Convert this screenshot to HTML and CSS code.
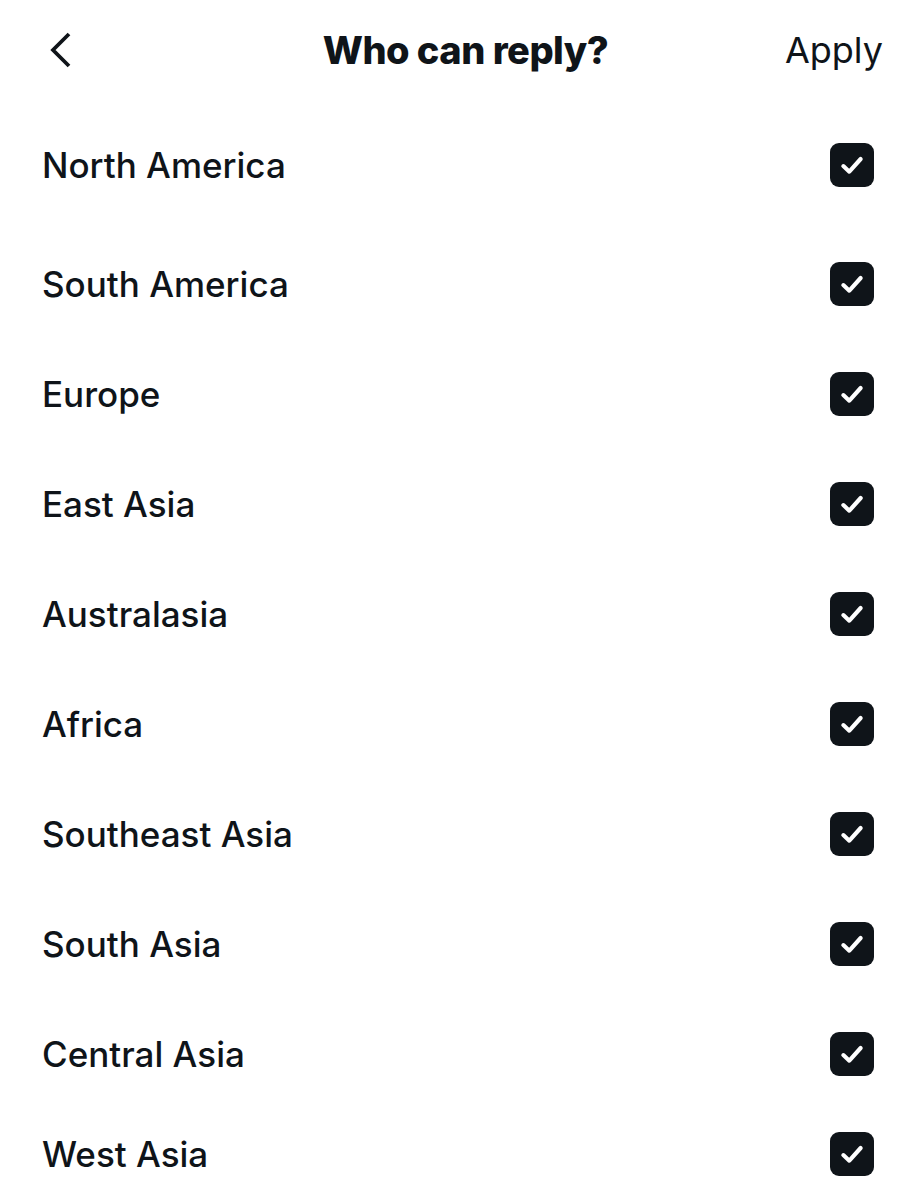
FILE: index.html
```html
<!DOCTYPE html>
<html lang="en">
  <head>
    <meta charset="UTF-8" />
    <meta name="viewport" content="width=device-width, initial-scale=1.0" />
    <title>Who can reply?</title>
    <link rel="stylesheet" href="styles.css">
  </head>
  <body>
    <div class="screen">
      <div class="header">
        <button class="back-btn" aria-label="Back">
          <svg width="24" height="36" viewBox="0 0 24 36">
            <path d="M21 2 L5 18 L21 34" fill="none" stroke="#0f1419" stroke-width="3.8" />
          </svg>
        </button>
        <h1 class="title">Who can reply?</h1>
        <button class="apply-btn">Apply</button>
      </div>

      <ul class="region-list">
        <li class="region first">
          <span class="region-name">North America</span>
          <span class="check"><svg viewBox="0 0 24 24"><path d="M5.5 12.8 L10 17 L18.5 7.5" /></svg></span>
        </li>
        <li class="region">
          <span class="region-name">South America</span>
          <span class="check"><svg viewBox="0 0 24 24"><path d="M5.5 12.8 L10 17 L18.5 7.5" /></svg></span>
        </li>
        <li class="region">
          <span class="region-name">Europe</span>
          <span class="check"><svg viewBox="0 0 24 24"><path d="M5.5 12.8 L10 17 L18.5 7.5" /></svg></span>
        </li>
        <li class="region">
          <span class="region-name">East Asia</span>
          <span class="check"><svg viewBox="0 0 24 24"><path d="M5.5 12.8 L10 17 L18.5 7.5" /></svg></span>
        </li>
        <li class="region">
          <span class="region-name">Australasia</span>
          <span class="check"><svg viewBox="0 0 24 24"><path d="M5.5 12.8 L10 17 L18.5 7.5" /></svg></span>
        </li>
        <li class="region">
          <span class="region-name">Africa</span>
          <span class="check"><svg viewBox="0 0 24 24"><path d="M5.5 12.8 L10 17 L18.5 7.5" /></svg></span>
        </li>
        <li class="region">
          <span class="region-name">Southeast Asia</span>
          <span class="check"><svg viewBox="0 0 24 24"><path d="M5.5 12.8 L10 17 L18.5 7.5" /></svg></span>
        </li>
        <li class="region">
          <span class="region-name">South Asia</span>
          <span class="check"><svg viewBox="0 0 24 24"><path d="M5.5 12.8 L10 17 L18.5 7.5" /></svg></span>
        </li>
        <li class="region">
          <span class="region-name">Central Asia</span>
          <span class="check"><svg viewBox="0 0 24 24"><path d="M5.5 12.8 L10 17 L18.5 7.5" /></svg></span>
        </li>
        <li class="region last">
          <span class="region-name">West Asia</span>
          <span class="check"><svg viewBox="0 0 24 24"><path d="M5.5 12.8 L10 17 L18.5 7.5" /></svg></span>
        </li>
      </ul>
    </div>
  </body>
</html>
```

FILE: styles.css
```css
* {
  margin: 0;
  padding: 0;
  box-sizing: border-box;
}

body {
  background: #ffffff;
  font-family: "Inter", "Liberation Sans", sans-serif;
  color: #0f1419;
  height: 1200px;
  overflow: hidden;
}

.screen {
  width: 921px;
}

.header {
  display: flex;
  align-items: center;
  justify-content: space-between;
  height: 100px;
  padding: 0 38px 0 48px;
}

.back-btn,
.apply-btn {
  background: none;
  border: none;
  color: #0f1419;
  font-family: inherit;
  cursor: pointer;
}

.back-btn {
  display: flex;
  width: 130px;
}

.title {
  font-size: 38px;
  font-weight: 800;
  letter-spacing: -0.5px;
}

.apply-btn {
  width: 130px;
  text-align: right;
  font-size: 36px;
  font-weight: 400;
}

.region-list {
  list-style: none;
  padding-top: 10px;
}

.region {
  display: flex;
  align-items: center;
  justify-content: space-between;
  height: 110px;
  padding: 0 47px 0 42px;
}

.region.first {
  margin-bottom: 9px;
}

.region.last {
  height: 90px;
}

.region-name {
  font-size: 35px;
  font-weight: 500;
}

.check {
  width: 44px;
  height: 44px;
  border-radius: 9px;
  background: #0f1419;
  display: flex;
  align-items: center;
  justify-content: center;
}

.check svg {
  width: 32px;
  height: 32px;
  fill: none;
  stroke: #ffffff;
  stroke-width: 3.1;
  stroke-linecap: round;
  stroke-linejoin: round;
}
```
